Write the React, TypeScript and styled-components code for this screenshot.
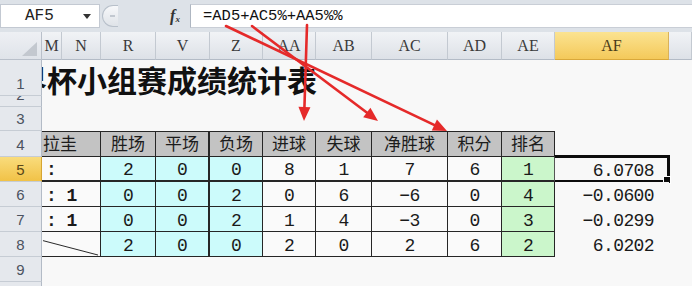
import React from 'react';
import styled, { createGlobalStyle, css } from 'styled-components';

const GlobalStyle = createGlobalStyle`
  html, body {
    margin: 0;
    padding: 0;
    background: #f8f8f8;
  }
  body {
    width: 692px;
    height: 286px;
    overflow: hidden;
  }
`;

const MONO = `"Liberation Mono", "DejaVu Sans Mono", monospace`;
const CJK = `"Noto Sans CJK SC", "Noto Sans", sans-serif`;

const Window = styled.div`
  position: relative;
  width: 692px;
  height: 286px;
  overflow: hidden;
  background: #f8f8f8;
  font-family: "Liberation Sans", sans-serif;
`;

const Chrome = styled.div`
  background: #dde2e8;
  padding: 4px 0;
`;

const FormulaBar = styled.div`
  display: flex;
  align-items: stretch;
  height: 24px;
`;

const NameBox = styled.div`
  width: 100px;
  box-sizing: border-box;
  background: #fff;
  border: 1px solid #c3c9d2;
  display: flex;
  align-items: center;
  padding-left: 24px;
  font-family: ${MONO};
  font-size: 16px;
  color: #222;
`;

const DropArrow = styled.span`
  margin-left: auto;
  margin-right: 8px;
  width: 0;
  height: 0;
  border-left: 4px solid transparent;
  border-right: 4px solid transparent;
  border-top: 5px solid #333;
`;

const Splitter = styled.div`
  margin: 1px 0 1px 2px;
  width: 16px;
  box-sizing: border-box;
  border: 1px solid #b8c0ca;
  border-right: none;
  border-radius: 12px 0 0 12px;
  background: linear-gradient(#f7f8fa, #dfe3e8);
  display: flex;
  align-items: center;
  justify-content: center;

  &::after {
    content: '';
    width: 5px;
    height: 2px;
    background: #c2c8d0;
    margin-left: 3px;
  }
`;

const FxButton = styled.div`
  margin-left: auto;
  width: 30px;
  display: flex;
  align-items: center;
  justify-content: center;
  font-family: "Liberation Serif", serif;
  font-style: italic;
  font-weight: 700;
  color: #333;

  b {
    font-size: 16px;
  }
  small {
    font-size: 9px;
    margin-top: 5px;
  }
`;

const FormulaInput = styled.div`
  width: 502px;
  box-sizing: border-box;
  background: #fff;
  border-left: 1px solid #aeb6c1;
  border-top: 1px solid #c9ced6;
  border-bottom: 1px solid #c9ced6;
  display: flex;
  align-items: center;
  padding-left: 12px;
  font-family: ${MONO};
  font-size: 15.5px;
  color: #111;
`;

const Sheet = styled.div`
  display: grid;
  grid-template-columns: 42px 20px 39px 55px 54px 53px 53px 56px 76px 54px 53px 114px 23px;
  grid-template-rows: 28px 36px 11px 24px 26px repeat(6, 25px);
  background: #f8f8f8;
`;

const Corner = styled.div`
  background: linear-gradient(#eef0f4, #dfe3e9);
  border-right: 1px solid #b9c0ca;
  border-bottom: 1px solid #b9c0ca;
  position: relative;

  &::after {
    content: '';
    position: absolute;
    right: 4px;
    bottom: 3px;
    width: 0;
    height: 0;
    border-left: 15px solid transparent;
    border-bottom: 14px solid #c3c8cf;
  }
`;

const ColHead = styled.div<{ $active?: boolean }>`
  box-sizing: border-box;
  display: flex;
  align-items: center;
  justify-content: center;
  font-family: "Liberation Serif", serif;
  font-size: 16px;
  color: #3a3a3a;
  background: linear-gradient(#f1f3f6, #dde1e7);
  border-right: 1px solid #c3c9d1;
  border-bottom: 1px solid #b3bbc6;
  padding-top: 1px;

  ${(p) =>
    p.$active &&
    css`
      background: linear-gradient(#fbe391, #f4c95a);
      border-right-color: #d9b25a;
      border-bottom-color: #d9a83a;
      color: #4a3c1a;
    `}
`;

const RowHead = styled.div<{ $active?: boolean }>`
  box-sizing: border-box;
  overflow: hidden;
  display: flex;
  align-items: flex-end;
  justify-content: center;
  padding-bottom: 3px;
  line-height: 16px;
  font-family: "Liberation Sans", sans-serif;
  font-size: 15px;
  color: #4b5260;
  background: #e5e8ed;
  border-right: 1px solid #b3bbc6;
  border-bottom: 1px solid #c6ccd4;

  ${(p) =>
    p.$active &&
    css`
      background: linear-gradient(#f9dc7c, #f1c247);
      color: #5a4718;
      border-right-color: #d6a532;
    `}
`;

const Blank = styled.div<{ $span?: number }>`
  grid-column: span ${(p) => p.$span ?? 1};
`;

const TitleCell = styled.div`
  grid-column: 2 / -1;
  overflow: hidden;
  display: flex;
  align-items: center;
  white-space: nowrap;
  padding-top: 2px;
`;

const Title = styled.span`
  margin-left: -55px;
  font-family: ${CJK};
  font-size: 30px;
  font-weight: 700;
  color: #111;
`;

type Tone = 'head' | 'cyan' | 'green' | 'plain';

const toneColor: Record<Tone, string> = {
  head: '#c3c3c3',
  cyan: '#ccfbfb',
  green: '#cbf6cb',
  plain: '#fafafa',
};

const Cell = styled.div<{
  $tone: Tone;
  $span?: number;
  $first?: boolean;
  $thickRight?: boolean;
  $thickBottom?: boolean;
  $left?: boolean;
}>`
  box-sizing: border-box;
  grid-column: span ${(p) => p.$span ?? 1};
  position: relative;
  overflow: hidden;
  display: flex;
  align-items: flex-end;
  justify-content: ${(p) => (p.$left ? 'flex-start' : 'center')};
  padding: 0 0 1px ${(p) => (p.$left ? '4px' : '0')};
  line-height: 18px;
  background: ${(p) => toneColor[p.$tone]};
  border-right: ${(p) => (p.$thickRight ? 2 : 1)}px solid #262626;
  border-bottom: ${(p) => (p.$thickBottom ? 2 : 1)}px solid #262626;
  border-top: ${(p) => (p.$first ? '1px solid #262626' : 'none')};
  font-family: ${MONO};
  font-size: 18px;
  letter-spacing: -0.6px;
  color: #1a1a1a;
`;

const HeadText = styled.span<{ $left?: boolean }>`
  font-family: ${CJK};
  font-size: 17px;
  line-height: 24px;
  letter-spacing: 0;
  color: #1c1c1c;
  margin-left: ${(p) => (p.$left ? '-3px' : '0')};
`;

const Team = styled.span`
  font-weight: 700;
  white-space: pre;
`;

const Slash = styled.svg`
  position: absolute;
  inset: 0;
  width: 100%;
  height: 100%;
`;

const ValueCell = styled.div`
  position: relative;
  display: flex;
  align-items: flex-end;
  justify-content: flex-end;
  padding: 0 15px 2px 0;
  line-height: 18px;
  font-family: ${MONO};
  font-size: 18px;
  letter-spacing: -0.6px;
  color: #1a1a1a;
  background: #f8f8f8;
`;

const Selection = styled.div`
  position: absolute;
  top: -2px;
  left: -1px;
  right: -1px;
  bottom: -1px;
  border: 3px solid #0c0c0c;
  border-left-width: 1px;
  border-left-color: #555;
  pointer-events: none;
`;

const Handle = styled.div`
  position: absolute;
  right: -4px;
  bottom: -4px;
  width: 6px;
  height: 6px;
  background: #0c0c0c;
  border: 1px solid #fff;
`;

const Overlay = styled.svg`
  position: absolute;
  left: 0;
  top: 0;
  width: 692px;
  height: 286px;
  pointer-events: none;
`;

const columns = ['M', 'N', 'R', 'V', 'Z', 'AA', 'AB', 'AC', 'AD', 'AE', 'AF', ''];
const headers = ['胜场', '平场', '负场', '进球', '失球', '净胜球', '积分', '排名'];
const tones: Tone[] = ['cyan', 'cyan', 'cyan', 'plain', 'plain', 'plain', 'plain', 'green'];

const rows = [
  { team: ':', vals: ['2', '0', '0', '8', '1', '7', '6', '1'], score: '6.0708' },
  { team: ': 1', vals: ['0', '0', '2', '0', '6', '−6', '0', '4'], score: '−0.0600' },
  { team: ': 1', vals: ['0', '0', '2', '1', '4', '−3', '0', '3'], score: '−0.0299' },
  { team: '', slash: true, vals: ['2', '0', '0', '2', '0', '2', '6', '2'], score: '6.0202' },
];

const arrows: [number, number, number, number][] = [
  [307, 25, 304, 121],
  [226, 26, 447, 131],
  [252, 26, 378, 121],
];

function Arrow({ x1, y1, x2, y2 }: { x1: number; y1: number; x2: number; y2: number }) {
  const len = Math.hypot(x2 - x1, y2 - y1);
  const ux = (x2 - x1) / len;
  const uy = (y2 - y1) / len;
  const head = 14;
  const half = 6;
  const bx = x2 - ux * head;
  const by = y2 - uy * head;
  const pts = [
    `${x2},${y2}`,
    `${bx - uy * half},${by + ux * half}`,
    `${bx + uy * half},${by - ux * half}`,
  ].join(' ');
  return (
    <g>
      <line x1={x1} y1={y1} x2={bx + ux * 2} y2={by + uy * 2} stroke="#e52a2a" strokeWidth={2.6} strokeLinecap="round" />
      <polygon points={pts} fill="#e52a2a" />
    </g>
  );
}

export default function App() {
  return (
    <Window>
      <GlobalStyle />
      <Chrome>
        <FormulaBar>
          <NameBox>
            AF5
            <DropArrow />
          </NameBox>
          <Splitter />
          <FxButton>
            <b>f</b>
            <small>x</small>
          </FxButton>
          <FormulaInput>=AD5+AC5%+AA5%%</FormulaInput>
        </FormulaBar>
      </Chrome>

      <Sheet>
        <Corner />
        {columns.map((c, i) => (
          <ColHead key={i} $active={c === 'AF'}>
            {c}
          </ColHead>
        ))}

        <RowHead>1</RowHead>
        <TitleCell>
          <Title>世界杯小组赛成绩统计表</Title>
        </TitleCell>

        <RowHead>2</RowHead>
        <Blank $span={12} />

        <RowHead>3</RowHead>
        <Blank $span={12} />

        <RowHead>4</RowHead>
        <Cell $tone="head" $span={2} $first $left>
          <HeadText $left>拉圭</HeadText>
        </Cell>
        {headers.map((h, i) => (
          <Cell key={h} $tone="head" $first $thickRight={i === 1}>
            <HeadText>{h}</HeadText>
          </Cell>
        ))}
        <Blank $span={2} />

        {rows.map((r, ri) => (
          <React.Fragment key={ri}>
            <RowHead $active={ri === 0}>{ri + 5}</RowHead>
            <Cell $tone="plain" $span={2} $left $thickBottom={ri === 0}>
              {r.slash ? (
                <Slash viewBox="0 0 59 25" preserveAspectRatio="none">
                  <line x1="1" y1="9" x2="57" y2="24" stroke="#222" strokeWidth="1" />
                </Slash>
              ) : (
                <Team>{r.team}</Team>
              )}
            </Cell>
            {r.vals.map((v, vi) => (
              <Cell key={vi} $tone={tones[vi]} $thickRight={vi === 1} $thickBottom={ri === 0}>
                {v}
              </Cell>
            ))}
            <ValueCell>
              {r.score}
              {ri === 0 && (
                <Selection>
                  <Handle />
                </Selection>
              )}
            </ValueCell>
            <Blank />
          </React.Fragment>
        ))}

        <RowHead>9</RowHead>
        <Blank $span={12} />
        <RowHead>10</RowHead>
        <Blank $span={12} />
      </Sheet>

      <Overlay viewBox="0 0 692 286">
        {arrows.map(([x1, y1, x2, y2], i) => (
          <Arrow key={i} x1={x1} y1={y1} x2={x2} y2={y2} />
        ))}
      </Overlay>
    </Window>
  );
}
